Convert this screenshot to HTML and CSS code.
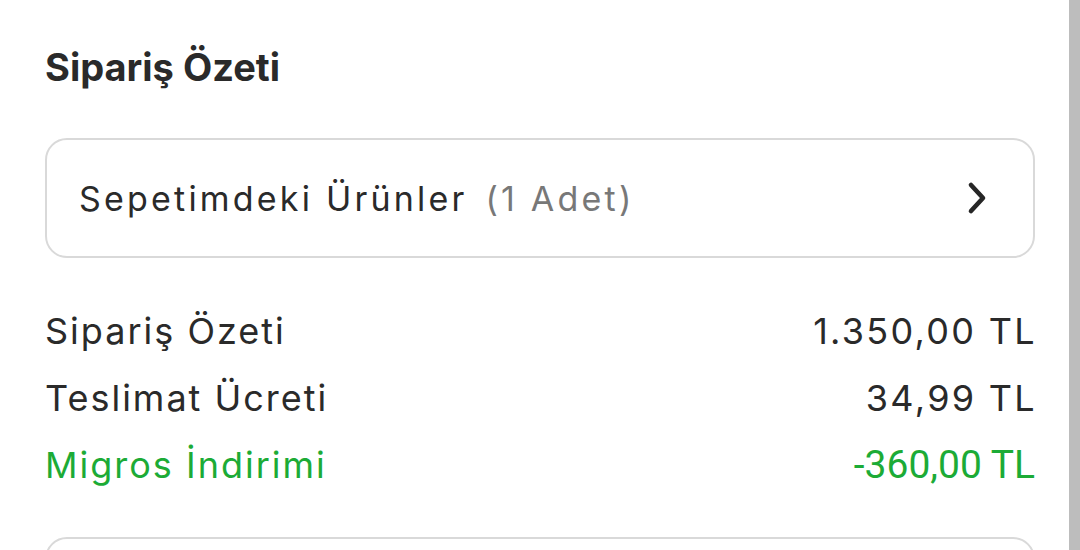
FILE: index.html
```html
<!DOCTYPE html>
<html lang="tr">

<head>
    <meta charset="UTF-8">
    <meta name="viewport" content="width=device-width, initial-scale=1.0">
    <title>Sipariş Özeti</title>
    <link rel="stylesheet" href="styles.css">
</head>

<body>
    <div class="page">
        <div class="content">
            <h2 class="title">Sipariş Özeti</h2>

            <div class="cart-box">
                <span class="cart-label">Sepetimdeki Ürünler<span class="count">(1 Adet)</span></span>
                <svg class="chevron" width="22" height="36" viewBox="0 0 22 36">
                    <path d="M5 5 L17 18 L5 31" fill="none" stroke="#262626" stroke-width="4.6" stroke-linecap="round" stroke-linejoin="round" />
                </svg>
            </div>

            <div class="summary">
                <div class="row">
                    <span>Sipariş Özeti</span>
                    <span class="value">1.350,00 TL</span>
                </div>
                <div class="row">
                    <span>Teslimat Ücreti</span>
                    <span class="value">34,99 TL</span>
                </div>
                <div class="row green">
                    <span>Migros İndirimi</span>
                    <span class="value discount">-360,00 TL</span>
                </div>
            </div>

            <div class="next-box"></div>
        </div>
        <div class="scrollbar"></div>
    </div>
</body>

</html>
```

FILE: styles.css
```css
body {
    margin: 0;
    background: #fff;
    font-family: Inter, "Noto Sans", sans-serif;
    color: #2a2a2a;
}

.page {
    display: flex;
    height: 550px;
    overflow: hidden;
}

.content {
    flex: 1;
    padding: 0 34px 0 45px;
}

.scrollbar {
    width: 11px;
    background: #bdbdbd;
}

.title {
    margin: 0;
    padding-top: 45px;
    font-size: 38px;
    font-weight: 700;
    line-height: 44px;
}

.cart-box {
    margin-top: 49px;
    height: 116px;
    border: 2px solid #d9d9d9;
    border-radius: 22px;
    display: flex;
    align-items: center;
    justify-content: space-between;
    padding: 0 45px 0 32px;
}

.cart-label {
    font-size: 34px;
    letter-spacing: 3.2px;
}

.count {
    color: #787878;
    margin-left: 18px;
}

.summary {
    margin-top: 40px;
}

.row {
    display: flex;
    justify-content: space-between;
    font-size: 36px;
    line-height: 67px;
    letter-spacing: 2px;
}

.value {
    margin-right: -2px;
    letter-spacing: 2.3px;
}

.green {
    color: #1cab36;
}

.discount {
    font-family: Roboto, sans-serif;
    font-size: 39px;
    letter-spacing: 0;
    margin-right: 0;
}

.next-box {
    margin-top: 38px;
    height: 80px;
    border: 2px solid #d9d9d9;
    border-radius: 22px;
}
```
